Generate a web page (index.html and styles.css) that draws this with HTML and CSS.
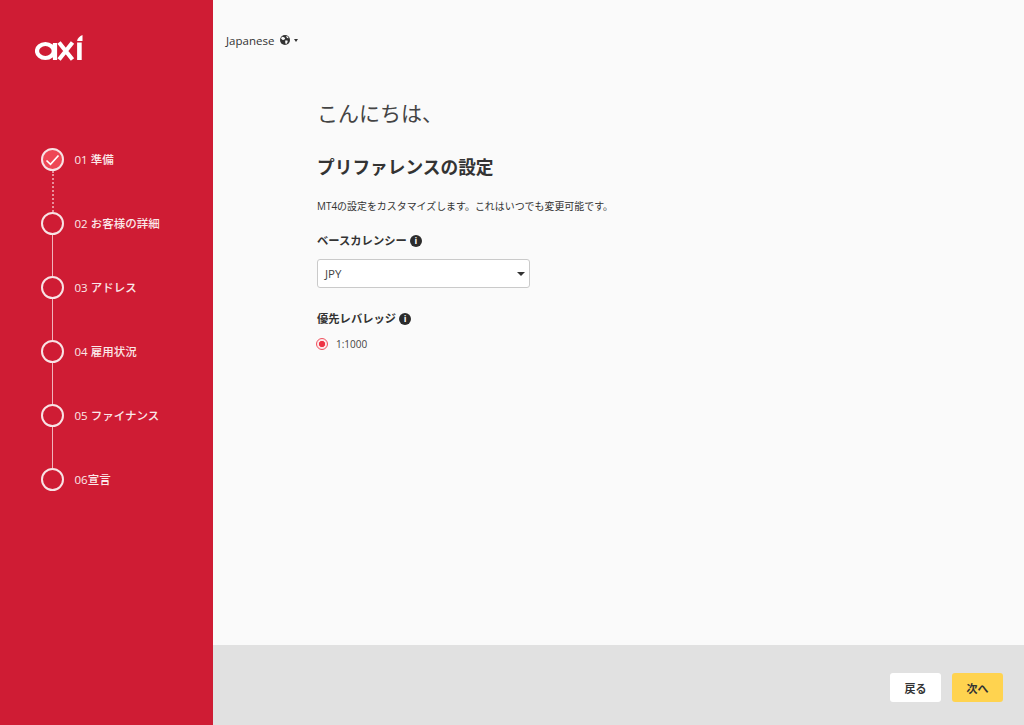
FILE: index.html
```html
<!DOCTYPE html>
<html lang="ja">
<head>
<meta charset="utf-8">
<title>Axi</title>
<link rel="stylesheet" href="styles.css">
</head>
<body>
<div class="app">
  <aside class="sidebar">
    <svg class="logo" width="48" height="26" viewBox="0 0 48 26" aria-label="axi">
      <ellipse cx="10.400" cy="16" rx="8.400" ry="7" fill="none" stroke="#fff" stroke-width="4.200"/>
      <path d="M20 8v17" stroke="#fff" stroke-width="4.200" fill="none"/>
      <path d="M24 7.500l13.500 17M37.500 7.500L24 24.500" stroke="#fff" stroke-width="4.200" fill="none"/>
      <path d="M44.400 7.500v17.500" stroke="#fff" stroke-width="4.600" fill="none"/>
      <path d="M42.100 6c.2-2.800 2.600-4.800 5.400-6v6z" fill="#fff"/>
    </svg>
    <ol class="steps">
      <li class="step done">
        <span class="dot"><svg width="15" height="12" viewBox="0 0 15 12"><path d="M1.500 6.500l4 3.800 8-8.800" fill="none" stroke="#fff" stroke-width="1.700"/></svg></span>
        <span class="step-label">01 準備</span>
      </li>
      <li class="step"><span class="dot"></span><span class="step-label">02 お客様の詳細</span></li>
      <li class="step"><span class="dot"></span><span class="step-label">03 アドレス</span></li>
      <li class="step"><span class="dot"></span><span class="step-label">04 雇用状況</span></li>
      <li class="step"><span class="dot"></span><span class="step-label">05 ファイナンス</span></li>
      <li class="step last"><span class="dot"></span><span class="step-label">06宣言</span></li>
    </ol>
  </aside>
  <div class="main">
    <header class="topbar">
      <span class="lang">Japanese</span>
      <svg class="globe" width="10" height="10" viewBox="0 0 10 10"><circle cx="5" cy="5" r="5" fill="#333"/><path d="M2 1.800l2.200.4 1 1.300-1 1.300-1.500.2L1 3.500zM5.500 5.200l2.300.5-.6 2.300-1.400 1.200-.7-2.200zM6 .8l2 1 .6 1.500-1.600-.4z" fill="#fafafa"/></svg>
      <span class="caret small"></span>
    </header>
    <main class="content">
      <h1 class="hello">こんにちは、</h1>
      <h2 class="title">プリファレンスの設定</h2>
      <p class="desc">MT4の設定をカスタマイズします。これはいつでも変更可能です。</p>
      <div class="field-label">ベースカレンシー<span class="info">i</span></div>
      <div class="select"><span>JPY</span><span class="caret"></span></div>
      <div class="field-label second">優先レバレッジ<span class="info">i</span></div>
      <label class="radio"><span class="radio-mark"></span><span>1:1000</span></label>
    </main>
    <footer class="footer">
      <button class="btn back">戻る</button>
      <button class="btn next">次へ</button>
    </footer>
  </div>
</div>
</body>
</html>
```
FILE: styles.css
```css
* { box-sizing: border-box; }
html, body { margin: 0; height: 100%; }
body {
  font-family: "Open Sans", "Noto Sans CJK JP", sans-serif;
  color: #333;
  overflow: hidden;
}
.app { display: flex; height: 725px; }
.sidebar {
  width: 213px;
  flex: none;
  background: #cf1c34;
  padding: 35px 0 0 35px;
  color: #fbe9ea;
}
.logo { display: block; }
.steps { list-style: none; margin: 87px 0 0 6px; padding: 0; }
.step {
  display: flex;
  align-items: flex-start;
  gap: 10.500px;
  height: 64px;
  position: relative;
}
.step::after {
  content: "";
  position: absolute;
  left: 11px;
  top: 23px;
  height: 41px;
  border-left: 1px solid #f0b3bb;
}
.step.done::after { border-left: 2px dotted #e88f9b; }
.step.last::after { display: none; }
.dot {
  width: 23px;
  height: 23px;
  border: 2px solid #f8e3e5;
  border-radius: 50%;
  flex: none;
  display: flex;
  align-items: center;
  justify-content: center;
}
.done .dot { background: #ee4755; }
.step-label { font-size: 11.500px; font-weight: 500; line-height: 23px; }
.main { flex: 1; display: flex; flex-direction: column; background: #fafafa; min-width: 0; }
.topbar {
  display: flex;
  align-items: center;
  height: 81px;
  padding: 0 0 1px 13px;
  font-size: 11.500px;
  color: #333;
}
.lang { margin-right: 6px; }
.globe { margin-right: 4px; }
.caret {
  width: 0;
  height: 0;
  border-left: 4px solid transparent;
  border-right: 4px solid transparent;
  border-top: 4px solid #333;
}
.caret.small { border-left-width: 2.500px; border-right-width: 2.500px; border-top-width: 3px; }
.content { flex: 1; padding: 16px 0 0 104px; }
.hello { margin: 0; font-size: 21px; font-weight: 400; line-height: 32px; color: #444; }
.title { margin: 25px 0 0; font-size: 17.700px; font-weight: 700; line-height: 26px; color: #333; }
.desc { margin: 18px 0 0; font-size: 9.950px; line-height: 16px; color: #333; }
.field-label {
  display: flex;
  align-items: center;
  margin-top: 18px;
  font-size: 11.300px;
  font-weight: 700;
  line-height: 18px;
  color: #333;
}
.field-label.second { margin-top: 22px; }
.info {
  width: 12px;
  height: 12px;
  margin-left: 3px;
  border-radius: 50%;
  background: #2b2b2b;
  color: #fff;
  font-size: 9px;
  font-weight: 700;
  line-height: 12px;
  text-align: center;
}
.select {
  display: flex;
  align-items: center;
  justify-content: space-between;
  width: 213px;
  height: 29px;
  margin-top: 9px;
  padding: 0 4px 0 7px;
  background: #fff;
  border: 1px solid #cacaca;
  border-radius: 3px;
  font-size: 11.500px;
  color: #444;
}
.radio { display: flex; align-items: center; gap: 8px; margin-top: 8px; margin-left: -1px; font-size: 10px; line-height: 16px; color: #444; }
.radio-mark {
  width: 12px;
  height: 12px;
  border: 1.500px solid #f0525f;
  border-radius: 50%;
  background: radial-gradient(circle, #ee3344 0 2.800px, #fde8ea 3.400px);
}
.footer {
  height: 80px;
  flex: none;
  background: #e1e1e1;
  display: flex;
  align-items: center;
  justify-content: flex-end;
  gap: 11px;
  padding: 5px 21px 0 0;
}
.btn {
  width: 51px;
  height: 29px;
  border: 0;
  border-radius: 3px;
  font-family: inherit;
  font-size: 11px;
  font-weight: 700;
  color: #333;
  padding: 0;
}
.back { background: #fff; }
.next { background: #ffd34f; }
```
